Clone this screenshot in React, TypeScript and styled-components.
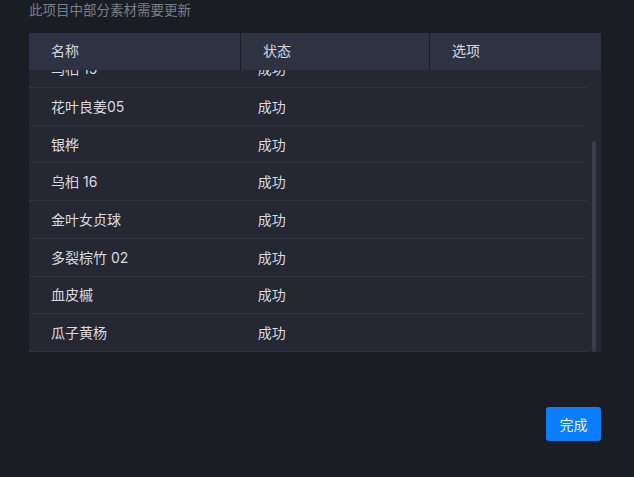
import React, { useEffect, useRef, useState } from 'react'
import styled, { createGlobalStyle } from 'styled-components'

interface Item {
  name: string;
  status: string;
}

const items: Item[] = [
  { name: '红花檵木 03', status: '成功' },
  { name: '鸡爪槭', status: '成功' },
  { name: '乌桕 15', status: '成功' },
  { name: '花叶良姜05', status: '成功' },
  { name: '银桦', status: '成功' },
  { name: '乌桕 16', status: '成功' },
  { name: '金叶女贞球', status: '成功' },
  { name: '多裂棕竹 02', status: '成功' },
  { name: '血皮槭', status: '成功' },
  { name: '瓜子黄杨', status: '成功' },
]

const GlobalStyle = createGlobalStyle`
  html, body {
    margin: 0;
    padding: 0;
    background: #1b1d25;
  }
  body {
    font-family: "Inter", "Noto Sans CJK SC", sans-serif;
  }
`

export default function App() {
  const listRef = useRef<HTMLDivElement>(null)
  const [thumb, setThumb] = useState({ top: 0, height: 0 })

  useEffect(() => {
    // list is shown scrolled to the end
    const el = listRef.current
    if (!el) return
    el.scrollTop = el.scrollHeight
    const ratio = el.clientHeight / el.scrollHeight
    setThumb({
      top: el.scrollTop * ratio,
      height: el.clientHeight * ratio,
    })
  }, [])

  return (
    <>
      <GlobalStyle />
      <Page>
        <Notice>此项目中部分素材需要更新</Notice>
        <Table>
          <HeadRow>
            <HeadCell>名称</HeadCell>
            <HeadCell>状态</HeadCell>
            <HeadCell $last>选项</HeadCell>
          </HeadRow>
          <Body>
            <List ref={listRef}>
              {items.map((item) => (
                <Row key={item.name}>
                  <Cell>{item.name}</Cell>
                  <Cell>{item.status}</Cell>
                  <Cell />
                </Row>
              ))}
            </List>
            <Track>
              <Thumb style={{ marginTop: thumb.top, height: thumb.height }} />
            </Track>
          </Body>
        </Table>
        <Footer>
          <DoneButton>完成</DoneButton>
        </Footer>
      </Page>
    </>
  )
}

const Page = styled.div`
  width: 634px;
  height: 477px;
  box-sizing: border-box;
  padding: 0 33px 0 29px;
  display: flex;
  flex-direction: column;
`;

const Notice = styled.div`
  height: 20px;
  line-height: 20px;
  font-size: 13.5px;
  color: #7b7e88;
  margin-bottom: 13px;
`;

const Table = styled.div`
  display: flex;
  flex-direction: column;
  background: #252833;
`;

const HeadRow = styled.div`
  display: grid;
  grid-template-columns: 212fr 189fr 171fr;
  height: 37px;
  background: #2e3242;
`;

const HeadCell = styled.div<{ $last?: boolean }>`
  display: flex;
  align-items: center;
  padding: 0 0 3px 22px;
  font-size: 14px;
  color: #d6d8de;
  border-right: ${(props) => (props.$last ? 'none' : '1px solid #1b1d25')};
`;

const Body = styled.div`
  display: flex;
  height: 282px;
`;

const List = styled.div`
  flex: 1;
  overflow: hidden;
`;

const Track = styled.div`
  width: 14px;
  display: flex;
  flex-direction: column;
  align-items: center;
`;

const Thumb = styled.div`
  width: 4px;
  border-radius: 2px;
  background: #3a3e4b;
`;

const Row = styled.div`
  display: grid;
  grid-template-columns: 212fr 189fr 171fr;
  height: 37.7px;
  box-sizing: border-box;
  padding-bottom: 1px;
  border-bottom: 1.5px solid #30343f;
`;

const Cell = styled.div`
  display: flex;
  align-items: center;
  padding-left: 22px;
  font-size: 14px;
  color: #dadbe0;
  white-space: nowrap;
`;

const Footer = styled.div`
  display: flex;
  justify-content: flex-end;
  margin-top: 55px;
`;

const DoneButton = styled.button`
  width: 55px;
  height: 34px;
  border: none;
  border-radius: 3px;
  background: #0a7efc;
  color: #f2f6ff;
  font-family: "Inter", "Noto Sans CJK SC", sans-serif;
  font-size: 14px;
  cursor: pointer;
`;
